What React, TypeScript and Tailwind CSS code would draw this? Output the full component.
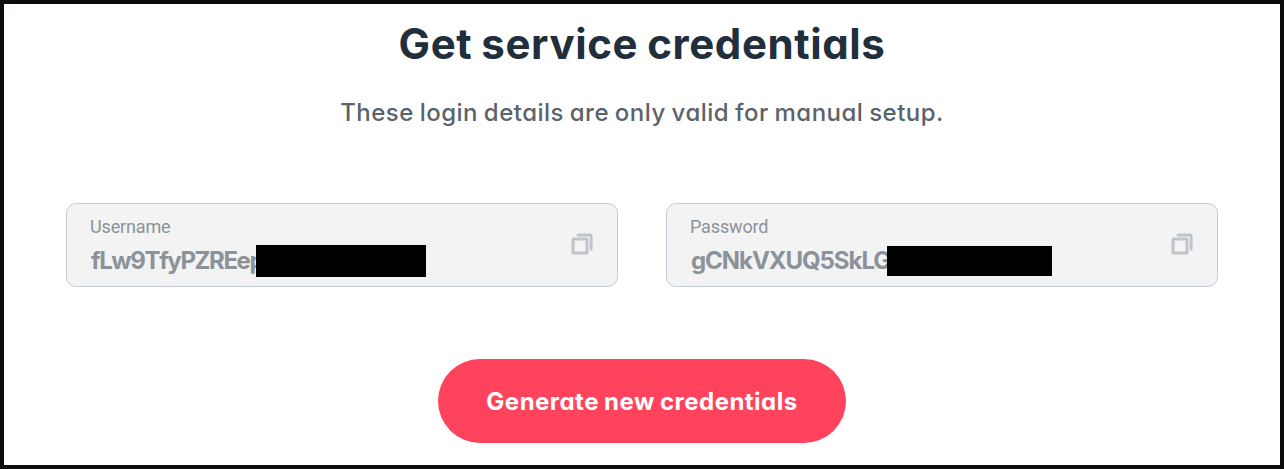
const credentials = [
  {
    label: "Username",
    value: "fLw9TfyPZREep",
    valueClass: "tracking-[-1.4px]",
    maskClass: "left-[189px] top-[41px] h-8 w-[170px]",
  },
  {
    label: "Password",
    value: "gCNkVXUQ5SkLG",
    valueClass: "tracking-[-1.05px]",
    maskClass: "left-[220px] top-[42px] h-[30px] w-[165px]",
  },
];

function CopyIcon() {
  return (
    <svg width="24" height="24" viewBox="0 0 24 24" fill="none" stroke="#bfc3ca" strokeWidth="3">
      <rect x="3" y="7" width="14" height="14" rx="0.5" />
      <path d="M8 2.9H20Q21.1 2.9 21.1 4V17" strokeLinecap="round" />
    </svg>
  );
}

export default function App() {
  return (
    <main className="flex h-[469px] w-[1284px] flex-col items-center border-4 border-[#0d0b0b] bg-white font-['Inter',sans-serif] antialiased">
      <h1 className="mt-[15px] h-[50px] whitespace-nowrap text-[42px] font-bold leading-[50px] tracking-[0.6px] [word-spacing:-1.5px] text-[#212e3b] [font-feature-settings:'cv11']">
        Get service credentials
      </h1>
      <p className="mt-[28px] h-8 whitespace-nowrap text-[24px] font-medium leading-8 tracking-[0.48px] [word-spacing:-1px] text-[#5a636b] [font-feature-settings:'cv11']">
        These login details are only valid for manual setup.
      </p>

      <div className="mt-[74px] grid w-[1152px] grid-cols-2 gap-12">
        {credentials.map((item) => (
          <div
            key={item.label}
            className="relative flex h-[84px] items-center justify-between rounded-[10px] border border-[#c5cad9] bg-[#f3f3f3] pl-[23px] pr-[23px]"
          >
            <div className="whitespace-nowrap pt-[2px] text-[#8b9299]">
              <div className="h-6 font-['Roboto',sans-serif] text-[18px] leading-6 tracking-[-0.15px]">
                {item.label}
              </div>
              <div className={`mt-[6px] h-8 pl-px text-[24px] font-bold leading-8 ${item.valueClass}`}>
                {item.value}
              </div>
            </div>
            <button type="button" aria-label={`Copy ${item.label}`} className="pb-[2px]">
              <CopyIcon />
            </button>
            <span className={`absolute bg-black ${item.maskClass}`} />
          </div>
        ))}
      </div>

      <button
        type="button"
        className="mt-[72px] h-[84px] w-[408px] whitespace-nowrap rounded-full bg-[#ff435d] pt-[2px] text-[24px] font-bold leading-8 tracking-[0.48px] [word-spacing:-1px] text-white [font-feature-settings:'cv11']"
      >
        Generate new credentials
      </button>
    </main>
  );
}
